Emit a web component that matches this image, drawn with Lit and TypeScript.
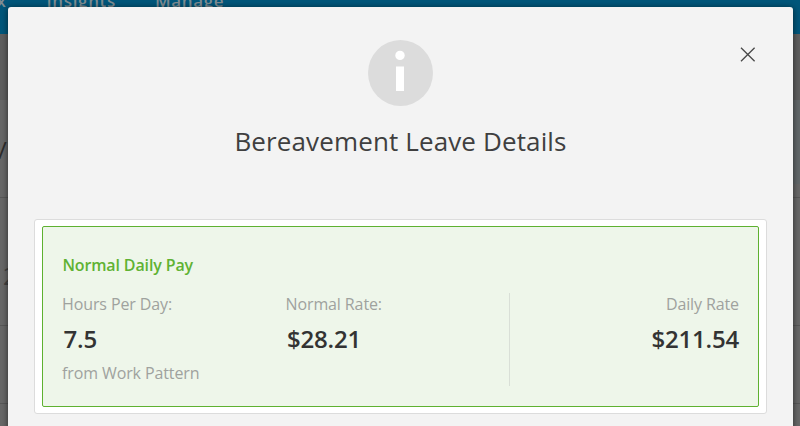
import { LitElement, html, css } from "lit";
import { customElement, property } from "lit/decorators.js";

@customElement("page-backdrop")
class PageBackdrop extends LitElement {
  static styles = css`
    :host { display: flex; flex-direction: column; height: 426px; overflow: hidden; background: #676767; }
    nav { height: 34px; background: #00567a; display: flex; overflow: hidden; flex: none; }
    nav span { font-size: 17px; line-height: 24px; letter-spacing: 0.65px; color: #7f8c91; font-weight: 600; margin-top: -11px; white-space: nowrap; flex: none; }
    .first { width: 50px; margin-left: -3.5px; }
    .second { width: 108.5px; }
    .band { height: 66px; background: #5e5e5e; flex: none; }
    .row { border-bottom: 1px solid #575757; box-sizing: border-box; flex: none; overflow: hidden; color: #2c2c2c; white-space: nowrap; }
    .r1 { height: 98px; font-size: 24px; line-height: 100px; text-indent: -2px; background: linear-gradient(#616769, #616769) right top / 10px 84px no-repeat; }
    .r2 { height: 128px; font-size: 24px; line-height: 156px; padding-left: 3px; color: #414141; }
    .r3 { height: 78px; }
  `;
  render() {
    return html`
      <nav><span class="first">x</span><span class="second">Insights</span><span>Manage</span></nav>
      <div class="band"></div>
      <div class="row r1">/</div>
      <div class="row r2">2</div>
      <div class="row r3"></div>
    `;
  }
}

@customElement("pay-figure")
class PayFigure extends LitElement {
  @property() label = "";
  @property() value = "";
  @property() note = "";
  static styles = css`
    :host { display: block; white-space: nowrap; }
    .label, .note { font-size: 16px; line-height: 22px; letter-spacing: -0.11px; color: #9fa29e; }
    .value { font-size: 24px; line-height: 34px; font-weight: 600; color: #333; letter-spacing: -0.2px; margin: 7px 0 6px; padding-left: 1.5px; }
    :host([end]) { text-align: right; }
  `;
  render() {
    return html`
      <div class="label">${this.label}</div>
      <div class="value">${this.value}</div>
      <div class="note">${this.note}</div>
    `;
  }
}

@customElement("app-root")
class AppRoot extends LitElement {
  static styles = css`
    :host { display: block; position: relative; width: 800px; height: 426px; overflow: hidden; font-family: "Open Sans", "Noto Sans", sans-serif; }
    .dialog { position: absolute; left: 8px; top: 7px; width: 785px; height: 440px; box-sizing: border-box; padding: 33px 26px 0; background: #f3f3f3; border-radius: 3px; box-shadow: 0 1px 6px rgba(0, 0, 0, 0.6); display: flex; flex-direction: column; align-items: center; }
    .info { display: block; width: 67px; height: 66px; flex: none; }
    .close { position: absolute; left: 732px; top: 39px; width: 16px; height: 16px; padding: 0; border: 0; background: none; }
    .close svg { display: block; }
    h1 { margin: 17px 0 0; font-size: 26px; line-height: 36px; font-weight: 400; letter-spacing: 0.13px; color: #3f3f3f; white-space: nowrap; }
    .frame { margin-top: 60px; width: 733px; height: 195px; box-sizing: border-box; flex: none; padding: 6px 7px; background: #fff; border: 1px solid #dcdcdc; border-radius: 3px; }
    .card { box-sizing: border-box; height: 181px; border: 1px solid #5eb130; border-radius: 2px; background: #eef6ea; padding: 27px 19px 0; }
    h2 { margin: 0; font-size: 16px; line-height: 22px; font-weight: 600; color: #5fb233; letter-spacing: -0.13px; padding-left: 0.4px; }
    .figures { display: grid; grid-template-columns: 223.5px 223.5px 1fr; margin-top: 17px; height: 93px; }
    .total { border-left: 1px solid #d9dfd7; }
  `;
  render() {
    return html`
      <page-backdrop></page-backdrop>
      <section class="dialog">
        <svg class="info" viewBox="0 0 67 66">
          <ellipse cx="33.5" cy="33" rx="32.5" ry="33" fill="#dcdcdc" />
          <circle cx="33" cy="15.4" r="4.7" fill="#fff" />
          <rect x="29" y="26.5" width="8" height="24.5" fill="#fff" />
        </svg>
        <button class="close" aria-label="Close">
          <svg width="16" height="16" viewBox="0 0 16 16"><path d="M1 1.7 14.6 15.3M14.6 1.7 1 15.3" stroke="#484848" stroke-width="1.3" /></svg>
        </button>
        <h1>Bereavement Leave Details</h1>
        <div class="frame">
          <div class="card">
            <h2>Normal Daily Pay</h2>
            <div class="figures">
              <pay-figure label="Hours Per Day:" value="7.5" note="from Work Pattern"></pay-figure>
              <pay-figure label="Normal Rate:" value="$28.21"></pay-figure>
              <pay-figure class="total" end label="Daily Rate" value="$211.54"></pay-figure>
            </div>
          </div>
        </div>
      </section>
    `;
  }
}
